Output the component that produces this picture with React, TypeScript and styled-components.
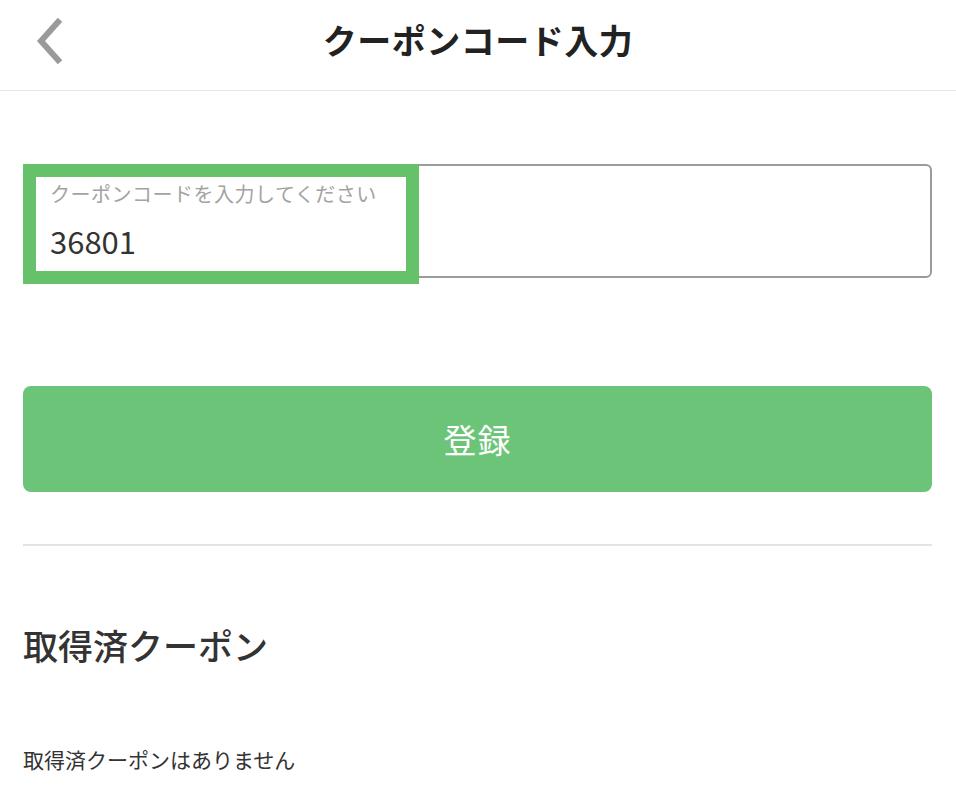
import React from "react";
import styled, { createGlobalStyle } from "styled-components";

const GlobalStyle = createGlobalStyle`
* {
  box-sizing: border-box;
}
body {
  margin: 0;
  padding: 0;
  background: #fff;
  font-family: "Noto Sans CJK JP", "Noto Sans", sans-serif;
  color: #333;
}
`;

const Page = styled.div`
  width: 956px;
  min-height: 800px;
  background: #fff;
`;

const Header = styled.header`
  height: 91px;
  display: grid;
  grid-template-columns: 120px 1fr 120px;
  align-items: center;
  border-bottom: 1px solid #e8e8e8;
`;

const BackButton = styled.button`
  border: 0;
  background: none;
  padding: 0 0 8px 34px;
  display: flex;
  align-items: center;
  height: 60px;
  cursor: pointer;
`;

const Title = styled.h1`
  margin: 0;
  text-align: center;
  font-size: 34px;
  font-weight: 700;
  color: #222;
  letter-spacing: 0.5px;
  padding-bottom: 12px;
`;

const Content = styled.main`
  padding: 0 24px 0 23px;
`;

const Field = styled.label`
  position: relative;
  display: flex;
  flex-direction: column;
  margin-top: 73px;
  height: 114px;
  border: 2px solid #9b9b9b;
  border-radius: 6px;
  padding: 16px 0 0 25px;
`;

const FieldLabel = styled.span`
  font-size: 20px;
  line-height: 24px;
  color: #a3a3a3;
  letter-spacing: 0.5px;
`;

const FieldValue = styled.span`
  margin-top: 17px;
  font-size: 31px;
  line-height: 36px;
  color: #333;
`;

const Highlight = styled.span`
  position: absolute;
  left: -2px;
  top: -2px;
  width: 396px;
  height: 120px;
  border: 13px solid #65c26a;
  pointer-events: none;
`;

const SubmitButton = styled.button`
  width: 100%;
  height: 106px;
  margin-top: 108px;
  border: 0;
  border-radius: 8px;
  background: #6cc479;
  color: #fff;
  font-family: inherit;
  font-size: 33px;
  letter-spacing: 1px;
  display: flex;
  align-items: center;
  justify-content: center;
`;

const Divider = styled.hr`
  margin: 52px 0 0;
  border: 0;
  height: 2px;
  background: #e3e3e3;
`;

const SectionTitle = styled.h2`
  margin: 77px 0 0;
  font-size: 35px;
  line-height: 44px;
  font-weight: 500;
  color: #333;
`;

const EmptyText = styled.p`
  margin: 78px 0 0;
  font-size: 21px;
  line-height: 28px;
  color: #333;
`;

const ChevronLeft = () => (
  <svg width="30" height="46" viewBox="0 0 30 46" fill="none">
    <path
      d="M24 4 L7 23 L24 42"
      stroke="#9a9a9a"
      strokeWidth="6"
      strokeLinecap="square"
      strokeLinejoin="miter"
    />
  </svg>
);

export default function App() {
  return (
    <Page>
      <GlobalStyle />
      <Header>
        <BackButton aria-label="戻る">
          <ChevronLeft />
        </BackButton>
        <Title>クーポンコード入力</Title>
        <span />
      </Header>
      <Content>
        <Field>
          <FieldLabel>クーポンコードを入力してください</FieldLabel>
          <FieldValue>36801</FieldValue>
          <Highlight />
        </Field>
        <SubmitButton>登録</SubmitButton>
        <Divider />
        <SectionTitle>取得済クーポン</SectionTitle>
        <EmptyText>取得済クーポンはありません</EmptyText>
      </Content>
    </Page>
  );
}
